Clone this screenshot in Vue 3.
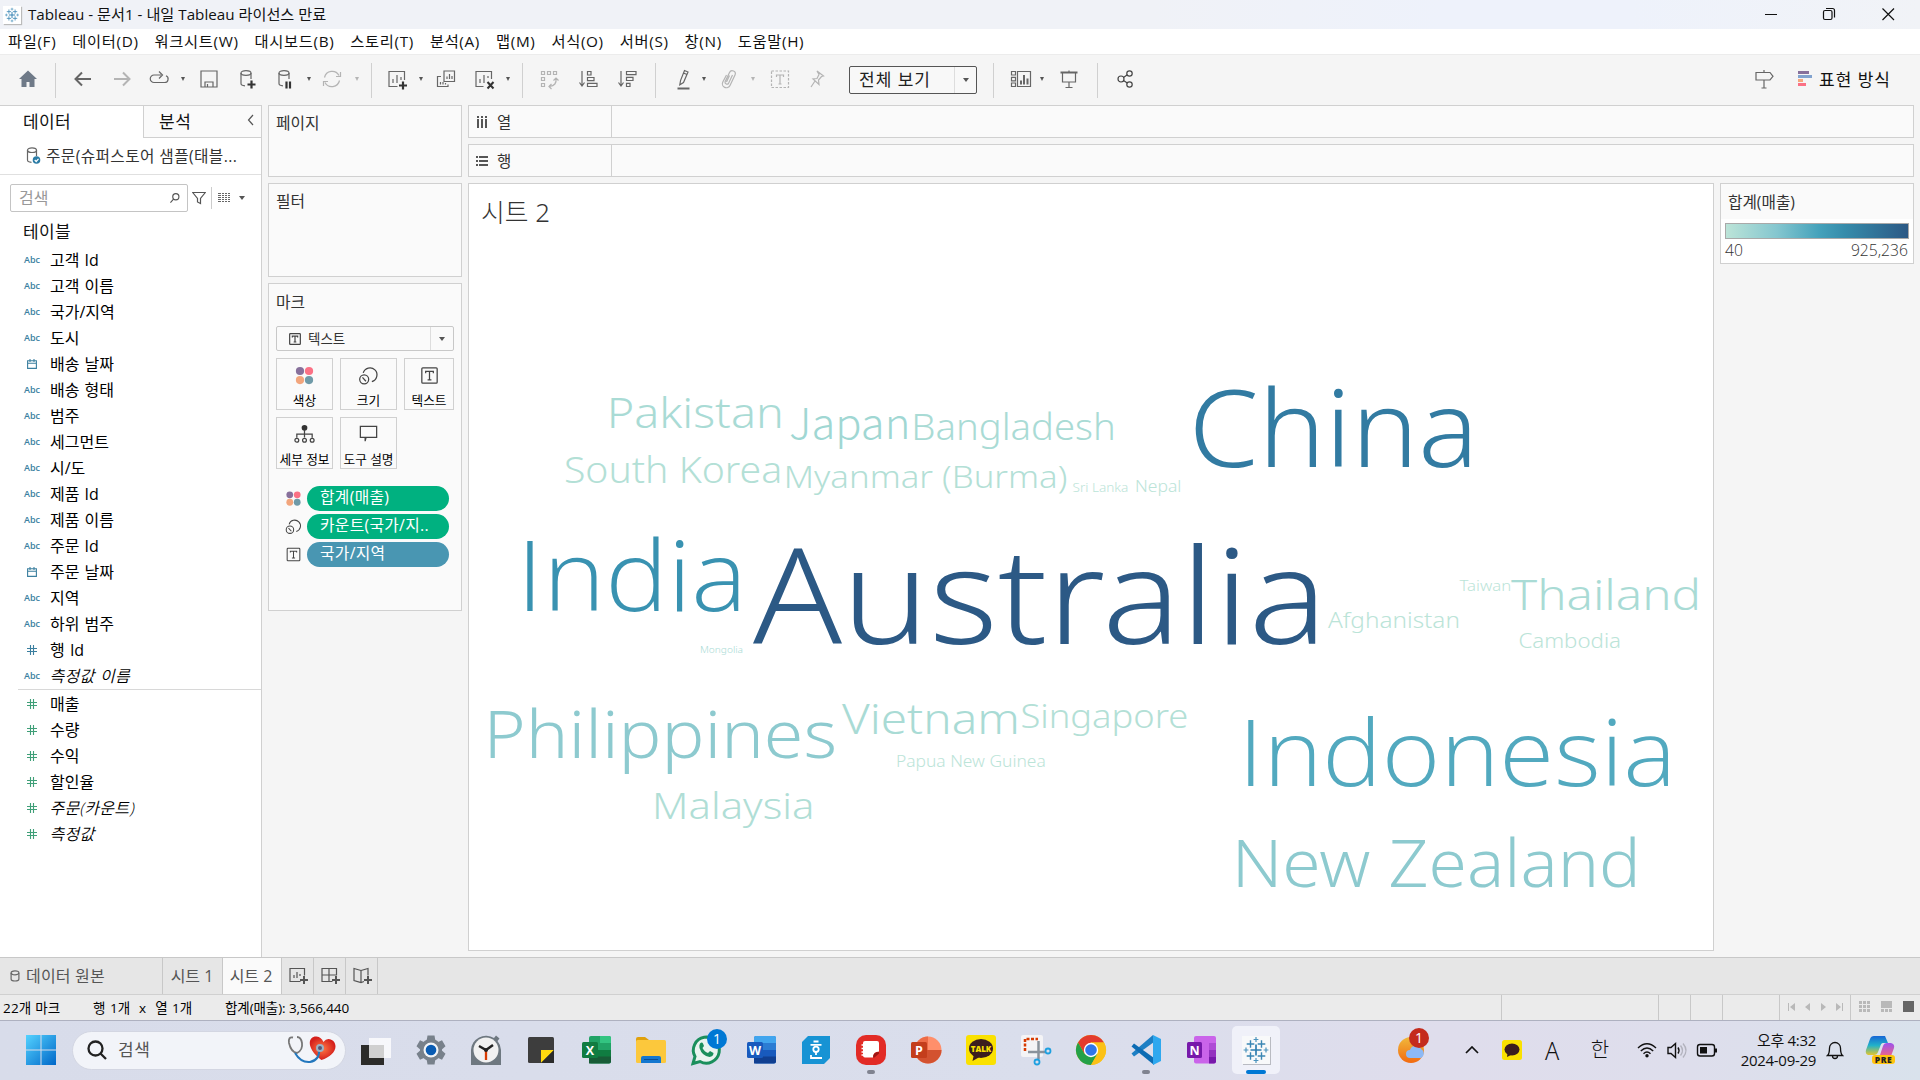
<script setup>
const menus = ['파일(F)', '데이터(D)', '워크시트(W)', '대시보드(B)', '스토리(T)', '분석(A)', '맵(M)', '서식(O)', '서버(S)', '창(N)', '도움말(H)']

const plus = (x, y, r) => `M${x - r} ${y}h${2 * r}M${x} ${y - r}v${2 * r}`
const logo = `<path stroke="#2f7fb0" stroke-width="1.7" fill="none" d="${plus(16, 16, 5.5)}"/><path stroke="#3a86b4" stroke-width="1.4" fill="none" d="${plus(10.5, 10, 3.8)}${plus(21.5, 10, 3.8)}${plus(10.5, 22, 3.8)}${plus(21.5, 22, 3.8)}"/><path stroke="#4b93bd" stroke-width="1.2" fill="none" d="${plus(16, 5.5, 2.4)}${plus(16, 26.5, 2.4)}${plus(6, 16, 2.4)}${plus(26, 16, 2.4)}"/>`
const fourDots = '<g stroke="none"><circle cx="7.3" cy="7.300" r="4.300" fill="#87709b"/><circle cx="16.700" cy="7.300" r="4.300" fill="#fb7185"/><circle cx="7.300" cy="16.700" r="4.300" fill="#f2a57c"/><circle cx="16.700" cy="16.700" r="4.300" fill="#6f9aa8"/></g>'
const sizeGlyph = '<path d="M6.500 9.300a7.300 7.300 0 1 1 9 9"/><circle cx="7.500" cy="16" r="4.700"/><path d="M5.700 14l3.600 4"/>'
const textGlyph = '<rect x="4" y="4" width="16" height="16" rx="1"/><path d="M8 9.600V7.800h8v1.800M12 8v8.400M10 16.500h4"/>'

const icons = {
  home: '<path d="M12 3.5L3 12h2.5v8h5v-5h3v5h5v-8H21z" fill="#6f7a88" stroke="none"/>',
  back: '<path stroke-width="2" d="M20 12H5M11 5.5L4.5 12l6.500 6.500"/>',
  forward: '<path stroke-width="2" d="M4 12h15M13 5.500l6.500 6.500-6.500 6.500"/>',
  redo: '<path d="M14 8H7a3.700 3.700 0 0 0 0 7.500h10.500a3.500 3.500 0 0 0 1.500-6.700M12 4.500L15.500 8 12 11.500"/>',
  save: '<path d="M4 4h16v16H4zM8 20v-5h8v5M10.500 17v3"/>',
  dbAdd: '<ellipse cx="10" cy="6" rx="5" ry="2.300"/><path d="M5 6v10.500q0 2 4 2.300M15 6v6"/><path stroke="#333" stroke-width="2.200" d="M15.500 13.500v8M11.500 17.500h8"/>',
  dbPause: '<ellipse cx="11" cy="6" rx="5" ry="2.300"/><path d="M6 6v10.500q0 2 4 2.300M16 6v6"/><path stroke="#333" stroke-width="2.200" d="M13.500 14.500v7M17 14.500v7"/>',
  sync: '<path d="M4.500 10.500A7.800 7.800 0 0 1 19 8.500M19.500 13.500A7.800 7.800 0 0 1 5 15.500M20.500 5v4.500h-4.500M3.500 19v-4.500H8"/>',
  sheetAdd: '<path d="M12.500 19.500H4V4.500h15.500v8.500M8 16v-4M12 16V8M16 13v-3"/><path stroke="#333" stroke-width="2.200" d="M18 14.500v8M14 18.500h8"/>',
  duplicate: '<path d="M10 4h10.500v10.500H10zM7 9.500H3.500v10H14V17.500M13 12V9.500M15.500 12V7M18 12V9M6.500 17.500V15M9 17.500V15M11.500 17.500V16"/>',
  sheetClear: '<path d="M11.500 19.500H4V4.500h15.500v7.500M8 16v-4M12 16V8M16 11v-2"/><path stroke="#333" stroke-width="2" d="M15.500 15l6 6.500M21.500 15l-6 6.500"/>',
  swap: '<path d="M4.500 4.500h3v3h-3zM10.500 4.500h3v3h-3zM16.500 4.500h3v3h-3zM4.500 10.500h3v3h-3zM4.500 16.500h3v3h-3zM19 11.500q1 7-6.500 8M16.500 13.500l2.500-2.500 2.500 2.500M14.500 17l-2.500 2.500 2.500 2.500"/>',
  sortAsc: '<path d="M5 4v14M2.500 15.500L5 19l2.500-3.500M10.500 4.500H14v3.500h-3.500zM10.500 10.500h6.500v3.200h-6.500zM10.500 16.300h9.500v3.200h-9.500z"/>',
  sortDesc: '<path d="M5 4v14M2.500 15.500L5 19l2.500-3.500M10.500 4.500H20v3.200h-9.500zM10.500 10.300h6.500v3.200h-6.500zM10.500 16.300H14v3.200h-3.500z"/>',
  pen: '<path d="M13.500 3.500l3.500 1.500-4.500 10.500-3.700 2.200.8-4.300zM12.500 6l3.500 1.500"/><path stroke-width="2" d="M6.500 21.500h12"/>',
  clip: '<path d="M15.500 8l-4 8.500a2 2 0 0 1-3.500-1.500l4.500-9.500a3 3 0 0 1 5.500 2.500l-5 10.500a4 4 0 0 1-7.200-3.500L9.500 8M12.500 8.500l-3 6.500"/>',
  textBox: '<rect x="3.500" y="4" width="17" height="16.500" stroke-dasharray="2.500 1.500"/><path d="M8.500 10V8h7v2M12 8v9M10.500 17h3"/>',
  pin: '<path d="M12 4l6.500 5-2 .5-3 3.500.5 4.500-6-5.500 4-.5 2-4zM10 14l-4 6"/>',
  showCards: '<path d="M2.500 4.500h4v3.500h-4zM2.500 10.300h4v3.500h-4zM2.500 16h4v3.500h-4zM8.500 4.500h13v15h-13z"/><path stroke-width="2" d="M12 17.500v-4M15 17.500V8M18.500 17.500v-6"/>',
  present: '<path stroke-width="2" d="M3.500 5.500h17"/><path d="M5.500 6v9h13V6M12 3.500V5M12 15v5M8.500 20.500h7"/>',
  share: '<g stroke="#444"><circle cx="8" cy="12" r="3"/><circle cx="16.500" cy="6.500" r="2.700"/><circle cx="16.500" cy="17.500" r="2.700"/><path d="M10.500 10.500l3.800-2.700M10.500 13.500l3.800 2.500"/></g>',
  guide: '<path d="M12 3v2.500M4 5.500h14l3 3.800-3 3.700H4zM12 13v8M9.500 21h5"/>',
}

const tools = [
  ['home', 28], ['sep', 56], ['back', 83], ['forward', 122, 1], ['redo', 159], ['caret', 183], ['save', 209], ['dbAdd', 248], ['dbPause', 285],
  ['caret', 309], ['sync', 332, 1], ['caret', 357, 1], ['sep', 372], ['sheetAdd', 397], ['caret', 421], ['duplicate', 446], ['sheetClear', 484],
  ['caret', 508], ['sep', 523], ['swap', 549, 1], ['sortAsc', 589], ['sortDesc', 628], ['sep', 656], ['pen', 683], ['caret', 704], ['clip', 729, 1],
  ['caret', 753, 1], ['textBox', 780, 1], ['pin', 817, 1], ['select', 913], ['sep', 994], ['showCards', 1021], ['caret', 1042], ['present', 1069], ['sep', 1098], ['share', 1125],
]
const widths = { sep: 2, caret: 8, select: 128 }
let edge = 0
const toolbar = tools.map(([name, center, off]) => {
  const width = widths[name] || 24
  const gap = center - width / 2 - edge
  edge = center + width / 2
  return { name, off, width, gap }
})

const dims = [
  ['abc', '고객 Id'], ['abc', '고객 이름'], ['abc', '국가/지역'], ['abc', '도시'], ['date', '배송 날짜'], ['abc', '배송 형태'], ['abc', '범주'], ['abc', '세그먼트'], ['abc', '시/도'],
  ['abc', '제품 Id'], ['abc', '제품 이름'], ['abc', '주문 Id'], ['date', '주문 날짜'], ['abc', '지역'], ['abc', '하위 범주'], ['num', '행 Id'], ['abc', '측정값 이름', 1],
]
const measures = [['매출'], ['수량'], ['수익'], ['할인율'], ['주문(카운트)', 1], ['측정값', 1]]

const markButtons = [
  { label: '색상', icon: fourDots }, { label: '크기', icon: sizeGlyph }, { label: '텍스트', icon: textGlyph },
  { label: '세부 정보', icon: '<circle cx="12" cy="5" r="3" fill="#333" stroke="none"/><path d="M12 7v8M4 15.500v-3.800h16v3.800"/><circle cx="4" cy="18" r="2"/><circle cx="12" cy="18" r="2"/><circle cx="20" cy="18" r="2"/>' },
  { label: '도구 설명', icon: '<path d="M3.500 3.500h17v11.500h-11L8.500 19V15h-5z"/>' },
]
const pills = [
  { text: '합계(매출)', icon: fourDots, kind: 'green' },
  { text: '카운트(국가/지..', icon: sizeGlyph, kind: 'green' },
  { text: '국가/지역', icon: textGlyph, kind: 'blue' },
]

// text, ink left, ink right, baseline, font size, colour, font
const words = [
  ['Pakistan', 611, 781, 428, 43, '#a9dbd5'],
  ['Japan', 790, 907.5, 439, 42, '#a0d7d3', 'Noto Sans CJK KR'],
  ['Bangladesh', 914.500, 1113, 440, 36.500, '#a9dbd5'],
  ['South Korea', 565, 779.500, 482.500, 36.500, '#b3e0d6'],
  ['Myanmar (Burma)', 787, 1066.500, 488, 32, '#b3e0d6'],
  ['Sri Lanka', 1072.500, 1127.500, 492, 12.500, '#bbe4d8'],
  ['Nepal', 1136, 1180.500, 492, 16.500, '#bbe4d8'],
  ['China', 1195, 1470, 466.500, 106, '#327ba2'],
  ['India', 526.500, 739, 611, 97, '#3992b1', 'Open Sans'],
  ['Australia', 753, 1316, 644, 133, '#2c5985'],
  ['Mongolia', 700, 743, 653, 9.500, '#a9dbd5'],
  ['Taiwan', 1459.500, 1510.500, 591, 14.500, '#bbe4d8'],
  ['Thailand', 1511, 1698, 610, 43, '#a9dbd5'],
  ['Afghanistan', 1328, 1458.500, 628, 22.500, '#bbe4d8'],
  ['Cambodia', 1519.500, 1620, 648, 20.500, '#bbe4d8'],
  ['Philippines', 490, 834.500, 758, 67, '#8dcacf'],
  ['Vietnam', 842, 1016, 734, 43, '#a9dbd5'],
  ['Singapore', 1021.500, 1187, 728, 33, '#b3e0d6'],
  ['Papua New Guinea', 897, 1045, 767, 16.500, '#bbe4d8'],
  ['Malaysia', 655.500, 811.500, 819, 36.500, '#b0ded6'],
  ['Indonesia', 1248, 1669, 786, 92, '#52a9bf', 'Open Sans'],
  ['New Zealand', 1238, 1635, 887, 66, '#8dcacf'],
]
const ctx = document.createElement('canvas').getContext('2d')
const cloud = words.map(([text, left, right, base, size, color, family = 'Noto Sans']) => {
  ctx.font = `300 ${size}px "${family}"`
  const m = ctx.measureText(text)
  const scale = (right - left) / (m.actualBoundingBoxRight + m.actualBoundingBoxLeft)
  return { text, size, color, family, transform: `translate(${left + m.actualBoundingBoxLeft * scale - 469} ${base - 184}) scale(${scale} 1)` }
})

const sheetAdds = [
  '<path d="M14.500 17.500H4V4.500h14.500v7M8 14v-3M11 14V8M14 12v-2"/>',
  '<path d="M14.500 17.500H4V4.500h14.500v7M4 11h14.500M11 4.500v13"/>',
  '<path d="M11 6.500L4 4.500v12l7 2 3-1M11 6.500l7-2v7M11 6.500v12"/>',
]

const apps = [
  '<path fill="#2c2c2a" d="M1 11h23v20H1z"/><path fill="#fff" opacity=".78" d="M9 4h22v20H9z"/>',
  '<g fill="#78818b"><circle cx="16" cy="16" r="11"/><path d="M12.500 1.500h7l1 6h-9zM12.500 30.500h7l1-6h-9zM27 6.200l3.500 6-4.500 4-4.500-7.500zM27 25.800l3.500-6-4.500-4-4.500 7.500zM5 6.200l-3.500 6 4.500 4 4.500-7.500zM5 25.800l-3.500-6 4.500-4 4.500 7.500z"/></g><circle cx="16" cy="16" r="7.500" fill="#f2f4f7"/><circle cx="16" cy="16" r="5.300" fill="#0a5cb3"/>',
  '<path fill="#6e7880" d="M1 31V16A15 15 0 0 1 24 4l2-2.500 3.500 3L27.500 7A15 15 0 0 1 31 16v15z"/><circle cx="16" cy="16" r="12.500" fill="#f1f1f1"/><path fill="none" stroke="#222" stroke-width="2.500" d="M9 12l7 4 7-5"/><path stroke="#d83b01" stroke-width="2.300" d="M16 16v10"/><circle cx="16" cy="16" r="2" fill="#222"/>',
  '<rect x="3" y="3" width="26" height="26" rx="1.500" fill="#3d3d3d"/><path fill="#ffd90f" d="M16 16h13L16 29z"/><path fill="#2b2b2b" d="M29 16v13H16z"/>',
  '<rect x="9" y="2" width="22" height="27.500" rx="2" fill="#21a366"/><path fill="#33c481" d="M20 2h9a2 2 0 0 1 2 2v5H20z"/><path fill="#107c41" d="M9 16h22v7H9z"/><path fill="#185c37" d="M9 22.500h22v5a2 2 0 0 1-2 2H9z"/><rect x="2" y="8" width="16" height="16" rx="1.500" fill="#107c41"/><text x="10" y="20.500" class="al">X</text>',
  '<path fill="#e0a10c" d="M1 5a2 2 0 0 1 2-2h7l4 3v5H1z"/><rect x="1" y="6" width="30" height="23" rx="1.500" fill="#fcc83c"/><path fill="#1477cf" d="M6 29v-5a2 2 0 0 1 2-2h16a2 2 0 0 1 2 2v5z"/><path stroke="#0a4d94" d="M9 25.500h14"/>',
  '<path fill="#e9f4f0" stroke="#1a8f5c" stroke-width="3" d="M3 29.500l2-7a13 13 0 1 1 5 5z"/><path fill="#1a8f5c" d="M10 9.500q2-2 3 0l1 2.500-1.500 2q2 4 5.500 5l2-2 3.500 2q0 3.500-4 4Q12 22 9.500 14q-.5-3 .5-4.500z"/><circle cx="27" cy="5" r="10" fill="#0078d4"/><text x="27" y="10" class="num">1</text>',
  '<rect x="9" y="2" width="22" height="27.500" rx="2" fill="#2b7cd3"/><path fill="#41a5ee" d="M11 2h18a2 2 0 0 1 2 2v5H9V4a2 2 0 0 1 2-2z"/><path fill="#185abd" d="M9 16h22v7H9z"/><path fill="#103f91" d="M9 22.500h22v5a2 2 0 0 1-2 2H9z"/><rect x="2" y="8" width="16" height="16" rx="1.500" fill="#185abd"/><text x="10" y="20.500" class="al">W</text>',
  '<path fill="#1793d4" d="M8 2h22v22l-6 6H2V8z"/><g fill="none" stroke="#fff" stroke-width="1.800"><path d="M13.500 7.500h5M10.500 10.800h11M11 21v3h11M16 17.500v3.500"/><circle cx="16" cy="15.300" r="2.700"/></g>',
  '<rect x="1" y="1" width="30" height="30" rx="10" fill="#e22b26"/><path fill="#fff" d="M10 7h12q2 0 2 2v8.500q-6 0-6 6h-8q-2 0-2-2V9q0-2 2-2z"/><path fill="#9c1512" d="M24 18v1.500l-4.500 4H18q0-5.500 6-5.500z"/><path stroke="#fff" stroke-width="1.500" d="M6.500 11h3M6.500 14.500h3M6.500 18h3M6.500 21h3"/>',
  '<circle cx="18" cy="16" r="13.500" fill="#ff8f6b"/><path fill="#ed6c47" d="M4.500 16A13.500 13.500 0 0 1 18 2.500V16z"/><path fill="#d35230" d="M4.500 16h27a13.500 13.500 0 0 1-27 0z"/><rect x="1" y="8" width="16" height="16" rx="1.500" fill="#c43e1c"/><text x="9" y="20.500" class="al">P</text>',
  '<rect x="1" y="1" width="30" height="30" rx="3" fill="#fae100"/><ellipse cx="16" cy="14.500" rx="12" ry="9.500" fill="#3b1e1e"/><path fill="#3b1e1e" d="M9 20l-1.500 7 7-4z"/><text x="16" y="18" class="talk">TALK</text>',
  '<rect x="1" y="1" width="22" height="22" rx="2" fill="#f4f4f6"/><path stroke="#d83b01" stroke-width="2.500" stroke-dasharray="3 1.500" fill="none" d="M5 17V5h13"/><path stroke="#8a939c" stroke-width="2.500" fill="none" d="M18.500 7v18M8 18h18"/><circle cx="28" cy="17" r="2.500" fill="none" stroke="#1ea0e0" stroke-width="1.800"/><circle cx="17" cy="28" r="2.500" fill="none" stroke="#1ea0e0" stroke-width="1.800"/>',
  '<circle cx="16" cy="16" r="15" fill="#fbc116"/><path fill="#e33b2e" d="M3 8.500A15 15 0 0 1 29 8.500H16L9.500 19.700z"/><path fill="#24a148" d="M3 8.500A15 15 0 0 0 16 31l6.500-11.300H9.500z"/><path fill="#fbc116" d="M16 31A15 15 0 0 0 29 8.500H16l6.500 11.200z"/><circle cx="16" cy="16" r="7.200" fill="#fff"/><circle cx="16" cy="16" r="5.800" fill="#2f76ea"/>',
  '<path fill="#1d7fc4" d="M23 1L1.500 19.500 4 22.500 24 8z"/><path fill="#0c6cb4" d="M1.500 12.500L4 9.500 24 24v7z"/><path fill="#2ea8ef" d="M23 1l8 4v22l-8 4z"/>',
  '<rect x="9" y="2" width="22" height="27.500" rx="2" fill="#ca64ea"/><path fill="#ae4bd5" d="M24 9h7v7h-7z"/><path fill="#9332bf" d="M24 16h7v7h-7z"/><path fill="#7719aa" d="M24 23h7v4.500a2 2 0 0 1-2 2h-5z"/><rect x="2" y="8" width="15" height="16" rx="1.500" fill="#7719aa"/><text x="9.500" y="20.500" class="al">N</text>',
  '<path fill="#b9bbc2" d="M3 3h28v28H3z"/><path fill="#f8f9fa" d="M2 2h28v28H2z"/>' + logo,
]
</script>

<template>
  <div class="screen">
    <header class="title">
      <svg class="logo" viewBox="0 0 32 32" v-html="logo"></svg>
      <span>Tableau - 문서1 - 내일 Tableau 라이선스 만료</span>
      <svg class="winbtns" width="134" height="20" fill="none" stroke="#111" stroke-width="1.200">
        <path d="M1 10.500h12M118.500 4.500l11.500 11.500M130 4.500l-11.500 11.500" />
        <rect x="59.500" y="6.500" width="8.500" height="9" rx="1.500" /><path d="M62 4.500h6.500q2 0 2 2v7" />
      </svg>
    </header>
    <nav class="menu"><span v-for="m in menus" :key="m">{{ m }}</span></nav>

    <div class="toolbar">
      <template v-for="(t, i) in toolbar" :key="i">
        <i v-if="t.name === 'sep'" class="sep" :style="{ marginLeft: t.gap + 'px' }"></i>
        <i v-else-if="t.name === 'caret'" class="caret" :class="{ off: t.off }" :style="{ marginLeft: t.gap + 'px' }"></i>
        <div v-else-if="t.name === 'select'" class="select" :style="{ marginLeft: t.gap + 'px' }"><span>전체 보기</span><b><i class="caret big"></i></b></div>
        <svg v-else class="ti" :class="{ off: t.off }" viewBox="0 0 24 24" :style="{ marginLeft: t.gap + 'px' }" v-html="icons[t.name]"></svg>
      </template>
      <svg class="ti guide" viewBox="0 0 24 24" v-html="icons.guide"></svg>
      <svg class="showme" width="14" height="16"><path fill="#87709b" d="M0 0h11v3H0z" /><path fill="#82a3cf" d="M0 4h14v3H0z" /><path fill="#f5a77d" d="M0 8h5v3H0z" /><path fill="#fb7185" d="M0 12h8v3H0z" /></svg>
      <span class="showtext">표현 방식</span>
    </div>

    <main>
      <aside class="data">
        <div class="dtabs"><div class="on">데이터</div><div class="other">분석<svg width="8" height="12"><path d="M6 1L1.500 6 6 11" fill="none" stroke="#555" stroke-width="1.200" /></svg></div></div>
        <div class="source">
          <svg width="16" height="18" fill="none" stroke="#666" stroke-width="1.200"><ellipse cx="6" cy="3.200" rx="4.500" ry="2.300" /><path d="M1.500 3v10q0 2 4 2.300M10.500 3v6" /><circle cx="10.500" cy="13" r="3.800" fill="#2a7ba5" stroke="none" /><path stroke="#fff" d="M8.700 13l1.500 1.500 2.300-2.700" /></svg>
          <span>주문(슈퍼스토어 샘플(태블...</span>
        </div>
        <div class="find">
          <div class="box"><span>검색</span><svg width="10" height="10" viewBox="0 0 12 12" fill="none" stroke="#555" stroke-width="1.400"><circle cx="7" cy="4.500" r="3.700" /><path d="M4.500 7L.5 11.500" /></svg></div>
          <svg class="funnel" width="14" height="14" fill="none" stroke="#555" stroke-width="1.200"><path d="M.7 1.500h12.600L8.500 7.500v5L5.500 11V7.500z" /></svg>
          <i></i>
          <svg class="lines" width="12" height="10" fill="#666"><path d="M0 0h3v1H0zM4 0h2v1H4zM7 0h2v1H7zM10 0h2v1h-2zM0 2h3v1H0zM4 2h2v1H4zM7 2h2v1H7zM10 2h2v1h-2zM0 4h3v1H0zM4 4h2v1H4zM7 4h2v1H7zM10 4h2v1h-2zM0 6h3v1H0zM4 6h2v1H4zM7 6h2v1H7zM10 6h2v1h-2zM0 8h3v1H0zM4 8h2v1H4zM7 8h2v1H7zM10 8h2v1h-2z" /></svg>
          <i class="caret big"></i>
        </div>
        <h3>테이블</h3>
        <div v-for="d in dims" :key="d[1]" class="field">
          <em v-if="d[0] === 'abc'">Abc</em>
          <svg v-else-if="d[0] === 'date'" class="fi blue" viewBox="0 0 10 10"><path d="M.6 1.800h8.800v7.600H.6zM.6 4.300h8.800M3 0v3M7 0v3" /></svg>
          <svg v-else class="fi blue" viewBox="0 0 10 10"><path d="M3.500 0v10M6.500 0v10M0 3.500h10M0 6.500h10" /></svg>
          <span :class="{ it: d[2] }">{{ d[1] }}</span>
        </div>
        <hr />
        <div v-for="d in measures" :key="d[0]" class="field">
          <svg class="fi green" viewBox="0 0 10 10"><path d="M3.500 0v10M6.500 0v10M0 3.500h10M0 6.500h10" /></svg>
          <span :class="{ it: d[1] }">{{ d[0] }}</span>
        </div>
      </aside>

      <section class="cards">
        <div class="card page">페이지</div>
        <div class="card filter">필터</div>
        <div class="card marks">
          <div class="mt">마크</div>
          <div class="mtype">
            <svg class="mi" width="12" height="12" viewBox="3 3 18 18" v-html="textGlyph"></svg><span>텍스트</span><b><i class="caret big"></i></b>
          </div>
          <div class="mbtns">
            <div v-for="b in markButtons" :key="b.label"><svg class="mi" width="23" height="23" viewBox="0 0 24 24" v-html="b.icon"></svg><span>{{ b.label }}</span></div>
          </div>
          <div v-for="p in pills" :key="p.text" class="prow">
            <svg class="mi" width="19" height="19" viewBox="0 0 24 24" v-html="p.icon"></svg><span class="pill" :class="p.kind">{{ p.text }}</span>
          </div>
        </div>
      </section>

      <section class="work">
        <div class="shelf"><div><svg width="12" height="12" fill="#555"><path d="M1 0h2v2H1zM5 0h2v2H5zM9 0h2v2H9zM1 3h2v9H1zM5 3h2v9H5zM9 3h2v9H9z" /></svg>열</div></div>
        <div class="shelf"><div><svg width="12" height="12" fill="#555"><path d="M0 1h2v2H0zM0 5h2v2H0zM0 9h2v2H0zM3 1h9v2H3zM3 5h9v2H3zM3 9h9v2H3z" /></svg>행</div></div>
        <div class="row">
          <div class="view">
            <h2>시트 2</h2>
            <svg class="cloud" width="1244" height="766">
              <text v-for="w in cloud" :key="w.text" :transform="w.transform" :font-size="w.size" :font-family="w.family" :fill="w.color">{{ w.text }}</text>
            </svg>
          </div>
          <div class="legend"><div class="lt">합계(매출)</div><div class="grad"></div><div class="lr"><span>40</span><span>925,236</span></div></div>
        </div>
      </section>
    </main>

    <div class="sheets">
      <div class="ds"><svg width="10" height="12" fill="none" stroke="#666" stroke-width="1.200"><ellipse cx="5" cy="2.800" rx="3.900" ry="2" /><path d="M1.100 3v6q0 2 3.900 2t3.900-2V3" /></svg>데이터 원본</div>
      <div class="s1">시트 1</div>
      <div class="s2">시트 2</div>
      <div v-for="(s, i) in sheetAdds" :key="i" class="add"><svg width="24" height="24" fill="none" stroke="#555" stroke-width="1.200"><g v-html="s"></g><path stroke-width="2" d="M18 12v8M14 16h8" /></svg></div>
    </div>
    <div class="status">
      <span class="a">22개 마크</span><span class="b">행 1개&nbsp; x&nbsp; 열 1개</span><span class="c">합계(매출): 3,566,440</span>
      <div class="cells"><i></i><i></i><i></i><i></i>
        <i><svg width="71" height="24" fill="#b9b9b9"><path d="M8 8h1v8H8zM15 8v8l-5-4zM30 8v8l-5-4zM41 8v8l5-4zM56 8v8l5-4zM62 8h1v8h-1z" /></svg></i>
        <i><svg width="68" height="24" fill="#b9b9b9"><path d="M8 6h3v3H8zM12 6h3v3h-3zM16 6h3v3h-3zM8 10h3v3H8zM12 10h3v3h-3zM16 10h3v3h-3zM8 14h3v3H8zM12 14h3v3h-3zM16 14h3v3h-3zM30 6h11v7H30zM30 14h3v3h-3zM34 14h3v3h-3zM38 14h3v3h-3z" /><path fill="#666" d="M52 6h11v11H52z" /></svg></i>
      </div>
    </div>

    <footer>
      <svg class="start" width="30" height="30"><defs><linearGradient id="win" x2="1" y2="1"><stop stop-color="#54d2ff" /><stop offset="1" stop-color="#0067c8" /></linearGradient></defs><path fill="url(#win)" d="M0 0h14.500v14.500H0zM15.500 0H30v14.500H15.500zM0 15.500h14.500V30H0zM15.500 15.500H30V30H15.500z" /></svg>
      <div class="search">
        <svg width="22" height="22" fill="none" stroke="#222" stroke-width="2.300"><circle cx="9.500" cy="9.500" r="7" /><path d="M14.500 14.500l5.500 5.500" /></svg>
        <span>검색</span>
        <svg width="50" height="30"><defs><radialGradient id="hrt"><stop stop-color="#ff7a45" /><stop offset="1" stop-color="#d5201c" /></radialGradient></defs>
          <path fill="url(#hrt)" d="M36 25C18 15 20 3 28 2.500q5 0 7.500 4.500Q39 1 45 4.500C52 10 47 20 36 25z" transform="rotate(8 36 13)" />
          <g fill="none"><path stroke="#777" stroke-width="1.800" d="M6 2.500Q1 1.500 2 8q2 9 8 10 6-3 5-10-1-6-5-6" /><path stroke="#2377bd" stroke-width="2" d="M8 18q6 10 15 9 10-2 9-13" /></g><circle cx="33" cy="13" r="4" fill="#9cb3c4" /><circle cx="33" cy="13" r="2" fill="#557" />
        </svg>
      </div>
      <div class="apps">
        <div v-for="(a, i) in apps" :key="i" :class="{ active: i === 16, run: i === 9 || i === 14 }"><svg width="32" height="32" v-html="a"></svg></div>
      </div>
      <svg class="weather" width="36" height="40"><defs><linearGradient id="sun" x2="0" y2="1"><stop stop-color="#f0b93c" /><stop offset="1" stop-color="#f26a10" /></linearGradient></defs><circle cx="15" cy="23" r="13" fill="url(#sun)" /><path fill="#8db9f5" d="M14 31a4 4 0 0 1 0-8 6 6 0 0 1 11-1 5 5 0 0 1 0 9z" /><circle cx="23" cy="11" r="10" fill="#c42b1c" /><text x="23" y="16" class="num">1</text></svg>
      <svg class="chev" width="14" height="8"><path d="M1 7l6-6 6 6" fill="none" stroke="#111" stroke-width="1.700" /></svg>
      <svg class="kk" width="20" height="20"><rect width="20" height="20" rx="2.500" fill="#fae100" /><ellipse cx="10" cy="9.500" rx="7.500" ry="6" fill="#3b1e1e" /><path d="M5.500 13l-.5 4 4-2z" fill="#3b1e1e" /></svg>
      <span class="ime">A</span><span class="han">한</span>
      <svg class="net" width="82" height="20" fill="none" stroke="#111" stroke-width="1.400">
        <path d="M1 8q9-8.500 18 0M3.800 11q6.200-6 12.400 0M6.500 13.800q3.500-3.400 7 0" /><circle cx="10" cy="15.800" r="1.700" fill="#111" stroke="none" />
        <path d="M31 7.500h3l4.500-4v14l-4.500-4h-3zM41 7.500q2 3 0 6" /><path stroke="#b2b2bd" d="M43.500 5.500q4 5 0 10M46 3.500q6 7 0 14" />
        <rect x="60.500" y="4.500" width="17" height="11.500" rx="2.500" /><path fill="#111" d="M63 7h7v6.500h-7z" stroke="none" /><path stroke-width="2" d="M79 8.500v4" />
      </svg>
      <div class="time"><span>오후 4:32</span><span>2024-09-29</span></div>
      <svg class="bell" width="18" height="20" fill="none" stroke="#111" stroke-width="1.300"><path d="M1.500 15.500q2-2 2-7.500a5.500 5.500 0 0 1 11 0q0 5.500 2 7.500zM6.500 16a2.500 2.500 0 0 0 5 0" /></svg>
      <svg class="copilot" width="32" height="32"><defs><linearGradient id="cp1" x2="0" y2="1"><stop stop-color="#1666d6" /><stop offset=".5" stop-color="#22b2c9" /><stop offset="1" stop-color="#e5c62d" /></linearGradient><linearGradient id="cp2" x2="0" y2="1"><stop stop-color="#9c52ee" /><stop offset="1" stop-color="#ff6a70" /></linearGradient></defs>
        <path fill="url(#cp1)" d="M9 2h11l3 7h-5q-2 0-3 4l-2 5q-1 3-4 3H3q-3-1-2-5L5 5q1-3 4-3z" /><path fill="url(#cp2)" d="M22 9h4q4 1 3 5l-3 8q-1 3-5 3H11q3-1 4-4l3-9q1-3 4-3z" /><rect x="7" y="21" width="23" height="9" rx="3" fill="#ffc40d" /><text x="18.500" y="28.800" class="pre">PRE</text></svg>
    </footer>
  </div>
</template>

<style>
body { margin: 0; overflow: hidden; }
svg { display: block; flex: none; }
svg text { text-anchor: middle; }
svg .al, svg .num, svg .talk, svg .pre { font-family: "Open Sans", sans-serif; }
svg .al { font-weight: 700; font-size: 12.5px; fill: #fff; }
svg .num { font-size: 14px; fill: #fff; font-weight: 500; }
svg .talk { font-weight: 800; font-size: 8px; fill: #fae100; }
svg .pre { font-weight: 800; font-size: 8.5px; fill: #222; letter-spacing: .5px; }
</style>

<style scoped>
* { box-sizing: border-box; }
.screen { width: 1920px; height: 1080px; display: flex; flex-direction: column; background: #f5f5f5; font-family: "Open Sans", "Noto Sans CJK KR", sans-serif; font-size: 16px; line-height: 20px; color: #111; overflow: hidden; white-space: nowrap; }
.screen > * { flex: none; }
.title { height: 29px; display: flex; align-items: center; background: linear-gradient(90deg, #f0f2f7 0 60%, #eef2fb 75% 85%, #f1f3f7); }
.title .logo { width: 18px; height: 18px; margin-left: 3px; background: #fff; box-shadow: 1px 1px 1px #bbb; }
.title span { margin: -2px 0 0 7px; font-size: 15.200px; }
.winbtns { margin: -1px 22px 0 auto; }
.menu { height: 25px; background: #fff; display: flex; align-items: center; padding: 0 0 1px 8px; gap: 16px; font-size: 15.300px; letter-spacing: .650px; }
.toolbar { height: 51px; border-top: 1px solid #ececec; display: flex; align-items: center; padding-bottom: 2px; }
.toolbar > * { flex: none; }
.ti { width: 24px; height: 24px; fill: none; stroke: #666; stroke-width: 1.2; }
.ti.off { opacity: .45; }
.sep { width: 2px; height: 35px; border-left: 1px solid #d0d0d0; margin-top: 2px; }
.caret { width: 8px; height: 8px; display: flex; align-items: center; justify-content: center; }
.caret::before { content: ""; border: 2.5px solid transparent; border-top: 4px solid #555; border-bottom: 0; }
.caret.big::before { border-width: 4px 3.5px 0; border-top-color: #555; }
.caret.off { opacity: .4; }
.select { width: 128px; height: 28px; border: 1px solid #555; border-radius: 2px; display: flex; background: #f8f8f8; align-items: center; font-size: 17px; letter-spacing: 1px; color: #222; margin-top: 2px; }
.select span { flex: 1; padding-left: 9px; }
.select b { width: 22px; height: 26px; border-left: 1px solid #ddd; display: grid; place-items: center; }
.guide { margin-left: 615px; }
.showme { margin-left: 22px; }
.showtext { margin: 2px 0 0 7px; font-size: 17px; letter-spacing: 1px; }
main { height: 852px; display: flex; }
.data { width: 262px; background: #fff; border-right: 1px solid #d0d0d0; }
.dtabs { display: flex; height: 33px; font-size: 17px; line-height: 32px; }
.dtabs .on { width: 143px; padding-left: 23px; border-top: 1px solid #d0d0d0; letter-spacing: .3px; }
.dtabs .other { flex: 1; display: flex; align-items: center; justify-content: space-between; border: 1px solid #d0d0d0; border-right: 0; background: #fafafa; padding: 0 6px 0 15px; letter-spacing: .5px; }
.dtabs svg { margin-top: -4px; }
.source { height: 37px; display: flex; align-items: center; padding: 0 0 1px 26px; gap: 4px; border-bottom: 1px solid #e0e0e0; color: #333; font-size: 15.700px; letter-spacing: .400px; }
.find { display: flex; align-items: center; margin: 9px 0 0 10px; height: 28px; }
.find .box { width: 178px; height: 28px; border: 1px solid #c4c4c4; border-radius: 2px; display: flex; justify-content: space-between; align-items: center; padding: 0 7px 0 8px; color: #999; }
.funnel { margin-left: 4px; }
.find > i:not(.caret) { width: 1px; height: 22px; background: #ccc; margin: 0 6px 0 5px; }
.find .caret { margin-left: 8px; }
h3 { margin: 9px 0 4px; height: 22px; line-height: 22px; padding: 1px 0 0 23px; font: inherit; font-size: 17px; letter-spacing: .4px; }
.field { height: 26px; display: flex; align-items: center; word-spacing: 1px; color: #000; }
.field em { font: 600 9px/12px "Open Sans", sans-serif; font-style: normal; color: #3b7f9f; width: 26px; margin-left: 24px; }
.field .fi { width: 10px; height: 10px; margin: 0 13px 0 27px; overflow: visible; fill: none; stroke-width: 1.100; }
.blue { stroke: #3b7f9f; }
.green { stroke: #3f9f78; }
.field .it { transform: skewX(-14deg); padding-left: 1px; letter-spacing: .3px; font-weight: 350; }
hr { border: 0; border-top: 1px solid #d8d8d8; margin: 0 0 1px 18px; }
.cards { width: 194px; margin-left: 6px; display: flex; flex-direction: column; gap: 6px; color: #333; }
.card { border: 1px solid #d0d0d0; background: #fafafa; padding: 6px 7px; line-height: 22px; font-size: 15.800px; }
.page { height: 72px; }
.filter { height: 94px; }
.marks { height: 328px; padding: 7px; }
.mt { height: 35px; }
.mi { fill: none; stroke: #444; stroke-width: 1.300; }
.mtype { height: 25px; border: 1px solid #c8c8c8; border-radius: 2px; display: flex; align-items: center; padding-left: 12px; font-size: 13.500px; }
.mtype .mi { stroke-width: 1.8; }
.mtype span { flex: 1; padding-left: 7px; }
.mtype b { width: 23px; height: 23px; border-left: 1px solid #ddd; display: grid; place-items: center; }
.mbtns { display: grid; grid-template-columns: 57px 57px 50px; gap: 7px; margin: 7px 0 17px; }
.mbtns div { height: 52px; border: 1px solid #d0d0d0; display: flex; flex-direction: column; align-items: center; justify-content: space-between; padding: 5px 0 0; font-size: 12.700px; line-height: 18px; color: #000; }
.prow { display: flex; align-items: center; height: 28px; padding: 0 5px 3px 8px; gap: 4px; }
.pill { width: 142px; height: 25px; border-radius: 13px; padding-left: 13px; color: #fff; line-height: 22px; letter-spacing: .3px; }
.pill.green { background: #00b180; }
.pill.blue { background: #4996b2; }
.work { margin-left: 6px; width: 1446px; }
.shelf { height: 33px; margin-bottom: 6px; border: 1px solid #d0d0d0; background: #fafafa; }
.shelf div { width: 143px; height: 31px; border-right: 1px solid #d0d0d0; display: flex; align-items: center; gap: 9px; padding-left: 7px; color: #333; font-size: 15.500px; }
.row { display: flex; gap: 6px; align-items: flex-start; }
.view { width: 1246px; height: 768px; border: 1px solid #d0d0d0; background: #fff; position: relative; }
.view h2 { font: inherit; font-weight: 300; margin: 0; font-size: 25.800px; line-height: 30px; padding: 13px 0 0 12px; color: #333; font-family: "Noto Sans", "Noto Sans CJK KR", sans-serif; }
.cloud { position: absolute; left: 0; top: 0; }
.cloud text { font-weight: 300; text-anchor: start; }
.legend { width: 194px; height: 81px; border: 1px solid #d0d0d0; background: #fff; color: #333; font-size: 15.700px; }
.lt { height: 35px; background: #fafafa; padding: 8px 7px; }
.grad { height: 16px; margin: 4px 4px 1px; border: 1px solid #a9a9a9; background: linear-gradient(90deg, #bce4d8, #84c6cf 28%, #45a2bb 51%, #368cab 65%, #2c5985); }
.lr { display: flex; justify-content: space-between; padding: 0 5px 0 4px; font-weight: 350; }
.sheets { height: 37px; background: #e6e6e6; border-top: 1px solid #c8c8c8; display: flex; color: #555; font-size: 16px; }
.sheets > div { border-right: 1px solid #c8c8c8; display: flex; align-items: center; justify-content: center; }
.sheets .ds { width: 163px; justify-content: flex-start; padding-left: 10px; gap: 6px; letter-spacing: .2px; }
.sheets .s1 { width: 60px; padding-right: 1px; }
.sheets .s2 { width: 59px; padding-right: 2px; background: #fafafa; }
.sheets .add { width: 32px; }
.status { height: 26px; background: #ebebeb; border-top: 1px solid #d0d0d0; display: flex; align-items: center; font-size: 13.500px; line-height: 24px; color: #000; }
.status .a { width: 90px; padding-left: 3px; letter-spacing: .2px; }
.status .b { width: 135px; padding-left: 3px; word-spacing: 1px; }
.status .c { letter-spacing: -.1px; }
.cells { margin-left: auto; display: flex; height: 25px; }
.cells i { border-left: 1px solid #c8c8c8; width: 157px; }
.cells i:nth-child(2), .cells i:nth-child(3) { width: 32px; }
.cells i:nth-child(4) { width: 57px; }
.cells i:nth-child(5) { width: 71px; }
.cells i:nth-child(6) { width: 70px; }
footer { height: 60px; border-top: 1px solid #aeb1c0; background: linear-gradient(90deg, #d8dcea, #dadeec 55%, #dfddec 75%, #dedeec 88%, #d9e2ec); display: flex; align-items: center; padding-bottom: 1px; }
footer > * { flex: none; }
.start { margin-left: 26px; }
.search { margin-left: 16px; width: 274px; height: 39px; border-radius: 20px; background: #f2f4f9; border: 1px solid #d3d6e2; display: flex; align-items: center; padding: 0 8px 0 13px; font-size: 17px; color: #555; }
.search span { flex: 1; padding: 0 0 1px 10px; letter-spacing: .5px; }
.apps { display: flex; gap: 7px; margin-left: 6px; }
.apps > div { width: 48px; height: 48px; border-radius: 5px; display: grid; place-items: center; position: relative; }
.apps svg { overflow: visible; }
.apps .active { background: #f0f1f9; }
.apps .active::after, .apps .run::after { content: ""; position: absolute; bottom: 0; left: 14px; width: 20px; height: 4px; border-radius: 2px; background: #0078d4; }
.apps .run::after { left: 20px; width: 8px; background: #808390; }
.weather { margin: -6px 0 0 116px; }
.chev { margin-left: 33px; }
.kk { margin-left: 23px; }
.ime { font-family: "Noto Sans", sans-serif; font-weight: 300; font-size: 26px; width: 20px; text-align: center; margin: -1px 0 0 20px; transform: scaleX(.9); }
.han { font-weight: 300; font-size: 20px; width: 24px; margin: -1px 0 0 26px; text-align: center; }
.net { margin-left: 25px; }
.time { margin: -1px 0 0 15px; width: 82px; display: flex; flex-direction: column; align-items: flex-end; font-size: 15px; line-height: 20px; letter-spacing: -.3px; }
.bell { margin-left: 10px; }
.copilot { margin-left: 21px; }
</style>
